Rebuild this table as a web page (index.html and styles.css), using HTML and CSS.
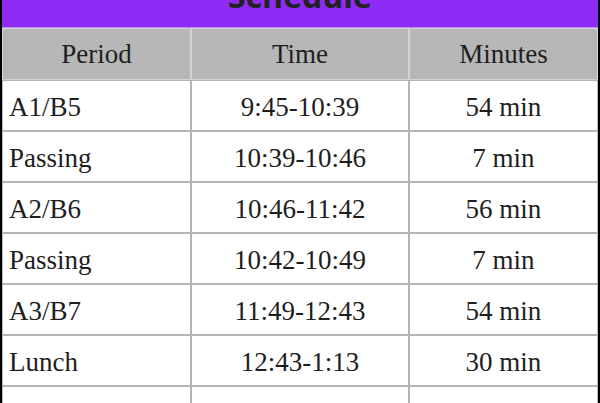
FILE: index.html
```html
<!DOCTYPE html>
<html>
<head>
<meta charset="utf-8">
<link rel="stylesheet" href="styles.css">
</head>
<body>
<div class="page">
  <div class="banner"><h1 class="title">Schedule</h1></div>
  <table class="schedule">
    <colgroup><col class="c1"><col class="c2"><col class="c3"></colgroup>
    <thead>
      <tr><th>Period</th><th>Time</th><th>Minutes</th></tr>
    </thead>
    <tbody>
      <tr><td class="left">A1/B5</td><td>9:45-10:39</td><td>54 min</td></tr>
      <tr><td class="left">Passing</td><td>10:39-10:46</td><td>7 min</td></tr>
      <tr><td class="left">A2/B6</td><td>10:46-11:42</td><td>56 min</td></tr>
      <tr><td class="left">Passing</td><td>10:42-10:49</td><td>7 min</td></tr>
      <tr><td class="left">A3/B7</td><td>11:49-12:43</td><td>54 min</td></tr>
      <tr><td class="left">Lunch</td><td>12:43-1:13</td><td>30 min</td></tr>
      <tr><td class="left">Passing</td><td>1:13-1:20</td><td>7 min</td></tr>
    </tbody>
  </table>
</div>
</body>
</html>
```
FILE: styles.css
```css
html, body {
  margin: 0;
  padding: 0;
  background: #000;
}
.page {
  margin: 0 2px 0 2px;
  background: #fff;
  min-height: 403px;
  overflow: hidden;
}
.banner {
  background: #8e2bf5;
  height: 27px;
  border-bottom: 1px solid #b98af7;
  overflow: hidden;
  text-align: center;
}
.title {
  margin: -27px 0 0 0;
  font-family: "Open Sans", sans-serif;
  font-weight: 700;
  font-size: 32px;
  line-height: 46px;
  color: #222;
}
.schedule {
  width: 596px;
  border-collapse: separate;
  border-spacing: 0;
  table-layout: fixed;
  font-family: "Liberation Serif", "Times New Roman", serif;
  font-size: 27px;
  color: #1e1e1e;
}
.c1 { width: 189px; }
.c2 { width: 218px; }
.c3 { width: 189px; }
.schedule th {
  background: #b7b7b7;
  font-weight: normal;
  height: 50px;
  padding: 0;
  border: 1px solid #d4d4d4;
  text-align: center;
}
.schedule td {
  height: 51px;
  padding: 4px 0 0 0;
  box-sizing: border-box;
  border: 1px solid #b4b4b4;
  text-align: center;
}
.schedule td.left {
  text-align: left;
  padding-left: 6px;
}
```
